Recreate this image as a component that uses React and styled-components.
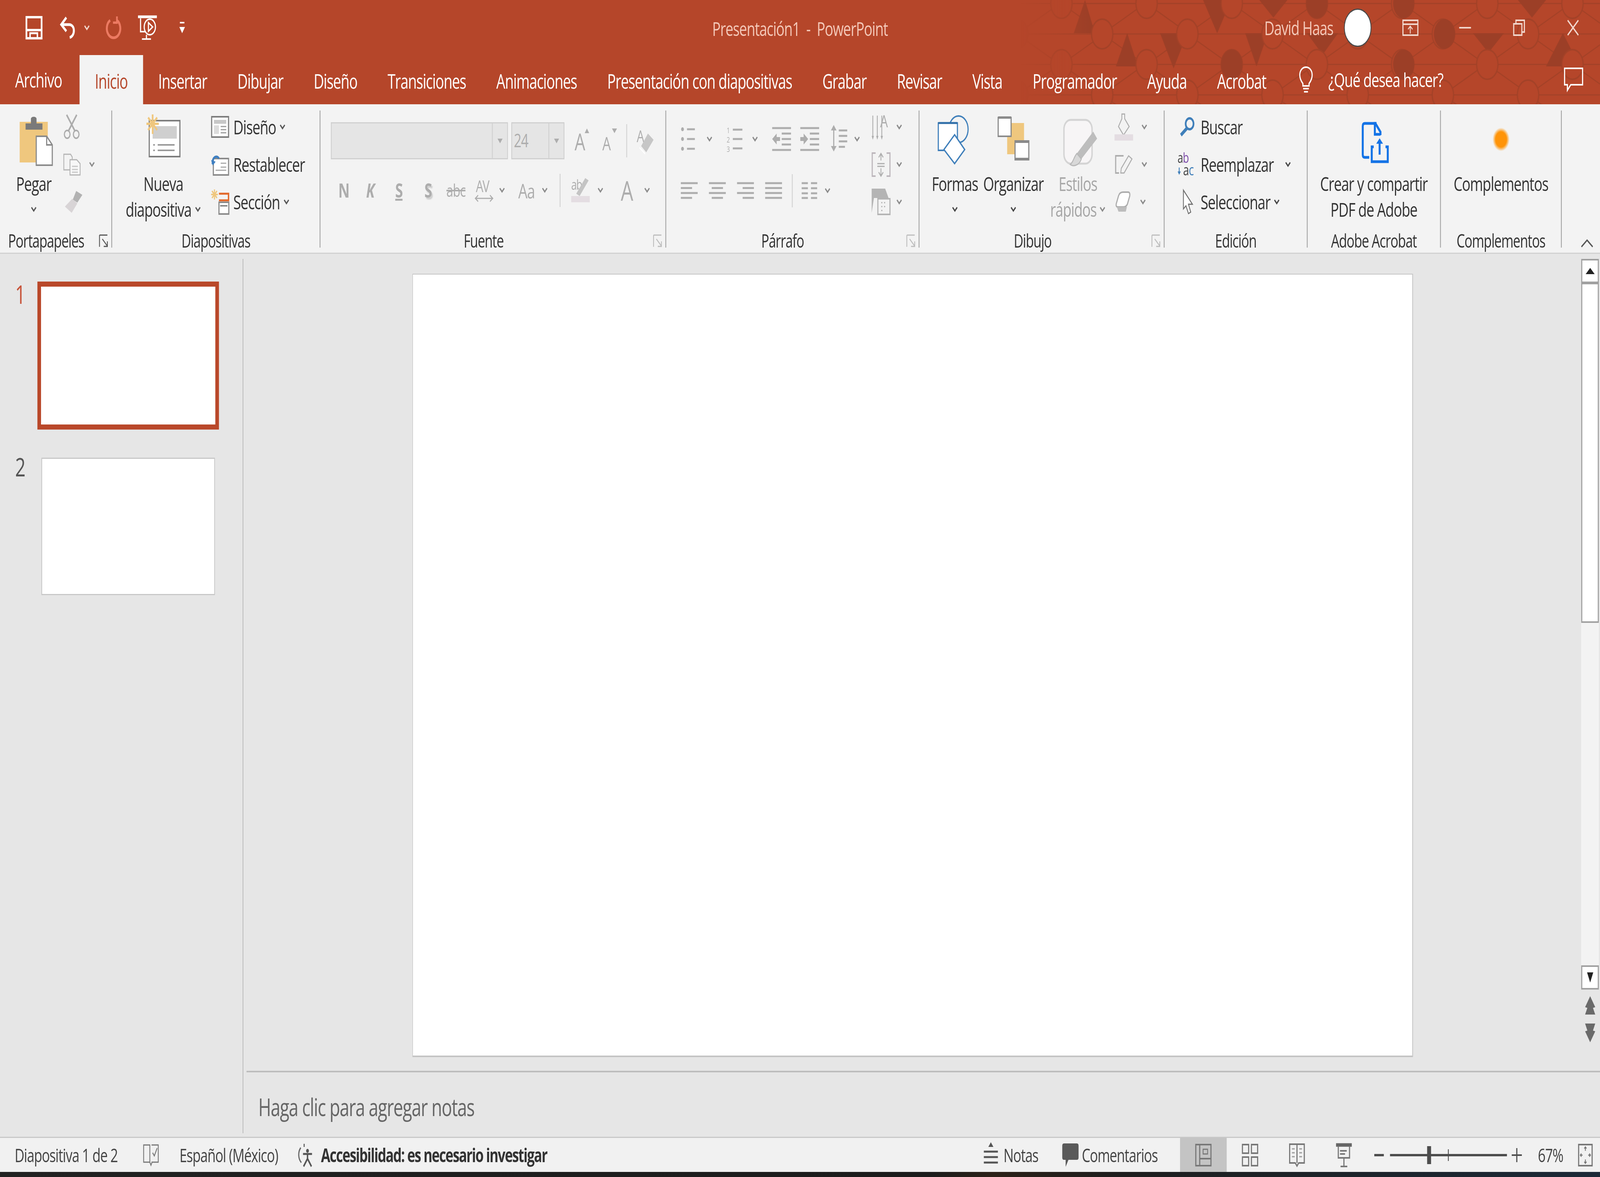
import React, { useLayoutEffect, useState } from "react";
import styled, { createGlobalStyle } from "styled-components";

const RED = "#B5462A";
const OFF = "#ADADAD";
const BLUE = "#3F7FBA";
const GOLD = "#EFC77E";
const PAGE_W = 5692;

const GlobalStyle = createGlobalStyle`
  html, body {
    margin: 0;
    padding: 0;
    overflow: hidden;
    background: #e6e6e6;
  }
  * {
    box-sizing: border-box;
  }
`;

const Page = styled.div`
  width: 5692px;
  height: 3014px;
  display: flex;
  flex-direction: column;
  overflow: hidden;
  transform-origin: 0 0;
  font-family: "Open Sans", "Liberation Sans", sans-serif;
  letter-spacing: -1.6px;
  color: #333;
`;

const Header = styled.header`
  position: relative;
  height: 267px;
  flex-shrink: 0;
  background: ${RED};
  overflow: hidden;
`;

const PatternLayer = styled.svg`
  position: absolute;
  top: 0;
  right: 0;
`;

const TitleBar = styled.div`
  position: relative;
  height: 141px;
  display: grid;
  grid-template-columns: 1fr auto 1fr;
  align-items: center;
`;

const QuickAccess = styled.div`
  display: flex;
  align-items: center;
  padding-left: 91px;
`;

const WindowTitle = styled.div`
  font-size: 50px;
  color: #f4c8b8;
  padding-top: 4px;
`;

const WindowTools = styled.div`
  display: flex;
  align-items: center;
  justify-content: flex-end;
  padding-right: 75px;
`;

const UserName = styled.span`
  font-size: 50px;
  color: #f4c8b8;
`;

const Avatar = styled.div`
  width: 98px;
  height: 98px;
  margin-left: 38px;
  margin-right: 110px;
  border-radius: 50%;
  background: #fff;
  border: 3px solid #4a4a4a;
`;

const TabRow = styled.nav`
  position: relative;
  height: 126px;
  display: flex;
`;

const Tab = styled.div`
  height: 126px;
  padding: ${(p) => (p.$up ? "0" : "6px")} 54px 0;
  display: flex;
  align-items: center;
  justify-content: center;
  font-size: 51px;
  white-space: nowrap;
`;

const FileTab = styled(Tab)`
  padding: 0 62px 0 54px;
  color: #fff;
`;

const HomeTab = styled(Tab)`
  width: 226px;
  padding: 6px 0 0;
  color: ${RED};
  background: #f3f3f3;
`;

const PlainTab = styled(Tab)`
  color: #fff;
  &:first-of-type {
    margin-left: 4px;
  }
`;

const SearchHint = styled.div`
  display: flex;
  align-items: center;
  margin-left: 62px;
  height: 126px;
  font-size: 50px;
  color: #fff;
`;

const HintText = styled.span`
  margin-left: 55px;
`;

const CommentBtn = styled.div`
  margin-left: auto;
  margin-right: 60px;
  display: flex;
  align-items: center;
`;

const Ribbon = styled.section`
  height: 383px;
  flex-shrink: 0;
  display: flex;
  padding: 16px 0 13px;
  background: #f3f3f3;
  border-bottom: 3px solid #d2d2d2;
`;

const Group = styled.div`
  position: relative;
  width: ${(p) => p.$w}px;
  flex-shrink: 0;
  display: flex;
  flex-direction: column;
  border-right: 3px solid #a3a3a3;
`;

const GroupBody = styled.div`
  height: 307px;
  display: flex;
  padding-left: ${(p) => p.$pl || 0}px;
`;

const GroupLabel = styled.div`
  height: 44px;
  line-height: 44px;
  padding-top: 4px;
  padding-right: ${(p) => p.$pr || 0}px;
  font-size: 47px;
  text-align: center;
  white-space: nowrap;
`;

const Launcher = styled.div`
  position: absolute;
  right: 10px;
  bottom: 0;
  width: 34px;
  height: 34px;
`;

const BigButton = styled.div`
  width: ${(p) => p.$w}px;
  margin-left: ${(p) => p.$ml || 0}px;
  flex-shrink: 0;
  display: flex;
  flex-direction: column;
  align-items: center;
  color: ${(p) => (p.$off ? "#A6A6A6" : "#333")};
`;

const IconSlot = styled.div`
  height: 154px;
  display: flex;
  padding-top: ${(p) => p.$top || 0}px;
  padding-left: ${(p) => p.$pl || 0}px;
`;

const BigLine = styled.div`
  height: 66px;
  display: flex;
  align-items: center;
  font-size: 50px;
  white-space: nowrap;
`;

const SmallCol = styled.div`
  margin-left: ${(p) => p.$ml || 0}px;
  flex-shrink: 0;
  display: flex;
  flex-direction: column;
  gap: 12px;
`;

const SmallRow = styled.div`
  height: 84px;
  display: flex;
  align-items: center;
  font-size: 50px;
  white-space: nowrap;
`;

const IconCell = styled.div`
  width: ${(p) => p.$w}px;
  margin-left: ${(p) => p.$ml || 0}px;
  flex-shrink: 0;
  display: flex;
  align-items: center;
  padding-left: ${(p) => p.$pl || 0}px;
`;

const FontStack = styled.div`
  display: flex;
  flex-direction: column;
  padding-top: 30px;
`;

const FontRow = styled.div`
  display: flex;
  align-items: center;
  height: ${(p) => p.$h}px;
  margin-top: ${(p) => p.$mt || 0}px;
`;

const ComboBox = styled.div`
  width: ${(p) => p.$w}px;
  height: 95px;
  margin-left: ${(p) => p.$ml || 0}px;
  display: flex;
  justify-content: space-between;
  background: #e5e5e5;
  border: 3px solid #d0d0d0;
  font-size: 47px;
  color: ${OFF};
`;

const ComboValue = styled.div`
  padding-left: 6px;
  line-height: 86px;
`;

const ComboArrow = styled.div`
  width: 54px;
  display: flex;
  align-items: center;
  justify-content: center;
  border-left: 3px solid #d0d0d0;
`;

const FontCell = styled.div`
  width: ${(p) => p.$w}px;
  margin-left: ${(p) => p.$ml || 0}px;
  flex-shrink: 0;
  text-align: center;
  font-size: ${(p) => p.$size || 50}px;
  font-weight: ${(p) => (p.$bold ? 700 : 400)};
  font-style: ${(p) => (p.$italic ? "italic" : "normal")};
  text-decoration: ${(p) => p.$line || "none"};
  text-shadow: ${(p) => (p.$shadow ? "4px 5px 3px #cfcfcf" : "none")};
  color: ${OFF};
`;

const ToolDivider = styled.div`
  width: 3px;
  height: 85px;
  margin-left: ${(p) => p.$ml || 0}px;
  flex-shrink: 0;
  background: #d2d2d2;
`;

const ParaLeft = styled.div`
  width: 679px;
  flex-shrink: 0;
  display: flex;
  flex-direction: column;
`;

const CollapseBtn = styled.div`
  margin-left: 68px;
  align-self: flex-end;
`;

const Main = styled.main`
  flex: 1;
  display: flex;
  min-height: 0;
`;

const SidePanel = styled.aside`
  width: 866px;
  flex-shrink: 0;
  margin: 13px 0 9px;
  padding: 58px 0 0 54px;
  display: flex;
  flex-direction: column;
  gap: 72px;
  background: #e6e6e6;
  border-right: 3px solid #bcbcbc;
`;

const ThumbRow = styled.div`
  display: flex;
  align-items: flex-start;
`;

const ThumbNumber = styled.div`
  width: 79px;
  margin-top: ${(p) => (p.$active ? 0 : -9)}px;
  line-height: 64px;
  font-size: 65px;
  letter-spacing: 0;
  color: ${(p) => (p.$active ? "#C8543A" : "#555")};
`;

const Thumb = styled.div`
  background: #fff;
  width: ${(p) => (p.$active ? 646 : 618)}px;
  height: ${(p) => (p.$active ? 379 : 352)}px;
  margin-left: ${(p) => (p.$active ? 0 : 14)}px;
  border: ${(p) => (p.$active ? "13px solid #B9482A" : "3px solid #c8c8c8")};
`;

const Editor = styled.div`
  flex: 1;
  display: flex;
  flex-direction: column;
  min-width: 0;
  background: #e6e6e6;
`;

const Stage = styled.div`
  height: 2092px;
  display: flex;
  padding: 51px 0 0 601px;
`;

const Slide = styled.div`
  width: 3560px;
  height: 2006px;
  flex-shrink: 0;
  background: #fff;
  border: solid #c4c4c4;
  border-width: 2px 3px 4px 2px;
`;

const ScrollColumn = styled.div`
  width: 63px;
  margin-left: 598px;
  margin-top: -38px;
  display: flex;
  flex-direction: column;
  align-items: center;
`;

const ScrollBtn = styled.div`
  width: 63px;
  height: 62px;
  flex-shrink: 0;
  display: flex;
  align-items: center;
  justify-content: center;
  background: #fff;
  border: 4px solid #a0a0a0;
`;

const ScrollTrack = styled.div`
  width: 63px;
  height: 1747px;
  background: #f3f3f3;
`;

const ScrollThumb = styled.div`
  width: 63px;
  height: 870px;
  background: #fff;
  border: 4px solid #a0a0a0;
  border-top-width: 3px;
`;

const SlideJump = styled.div`
  margin-top: ${(p) => p.$mt}px;
  display: flex;
`;

const Notes = styled.div`
  flex: 1;
  margin-left: 11px;
  padding: 46px 0 0 42px;
  border-top: 4px solid #bdbdbd;
  font-size: 62px;
  letter-spacing: -1.8px;
  color: #666;
`;

const StatusBar = styled.footer`
  height: 90px;
  flex-shrink: 0;
  display: flex;
  align-items: center;
  background: #f1f1f1;
  border-top: 3px solid #c8c8c8;
  font-size: 48px;
  color: #444;
`;

const StatusRight = styled.div`
  margin-left: auto;
  padding-right: 26px;
  display: flex;
  align-items: center;
`;

const StatusText = styled.span`
  margin-left: ${(p) => p.$ml || 0}px;
  flex-shrink: 0;
  white-space: nowrap;
  font-weight: ${(p) => (p.$bold ? 700 : 400)};
  letter-spacing: ${(p) => (p.$bold ? "-2.2px" : "-1.6px")};
  color: ${(p) => (p.$bold ? "#333" : "#444")};
`;

const ViewBtn = styled.div`
  width: ${(p) => p.$w}px;
  margin-left: ${(p) => p.$ml || 0}px;
  height: 87px;
  flex-shrink: 0;
  display: flex;
  align-items: center;
  justify-content: center;
  background: ${(p) => (p.$active ? "#C4C4C4" : "transparent")};
`;

const ZoomTrack = styled.div`
  position: relative;
  width: 416px;
  height: 6px;
  margin-left: 22px;
  flex-shrink: 0;
  background: #4d4d4d;
`;

const ZoomThumb = styled.div`
  position: absolute;
  left: 132px;
  top: -20px;
  width: 14px;
  height: 46px;
  background: #4d4d4d;
`;

const ZoomTick = styled.div`
  position: absolute;
  left: 206px;
  top: -12px;
  width: 3px;
  height: 30px;
  background: #4d4d4d;
`;

const Taskbar = styled.div`
  height: 13px;
  flex-shrink: 0;
  background: linear-gradient(90deg, #222 0%, #1c1c1c 58%, #2c2118 62%, #1e1e1e 70%, #1c2a38 100%);
`;

const Svg = styled.svg`
  display: block;
  flex-shrink: 0;
  overflow: visible;
  margin-left: ${(p) => p.$ml || 0}px;
  margin-top: ${(p) => p.$mt || 0}px;
`;

const Ic = ({ w, h, ml, mt, children, ...rest }) => (
  <Svg width={w} height={h} viewBox={`0 0 ${w} ${h}`} fill="none" $ml={ml} $mt={mt} {...rest}>
    {children}
  </Svg>
);

const Chev = ({ ml, color = "#8a8a8a" }) => (
  <Ic w={22} h={16} ml={ml}>
    <path d="M3 3L11 12L19 3" stroke={color} strokeWidth="4" />
  </Ic>
);

// positions read off the reference, in page pixels
const darkTriangles = [
  "3820,85 3860,0 3895,85",
  "4127,85 4224,85 4175,175",
  "3970,170 4010,85 4048,170",
  "4280,0 4380,0 4330,85",
  "4430,85 4510,85 4470,170",
  "4480,0 4580,0 4530,45",
  "4650,85 4760,85 4705,140",
  "5240,85 5350,85 5295,135",
  "5400,0 5500,0 5450,45",
  "5500,170 5560,85 5620,170",
];
const darkRings = ["5139,87", "4382,165", "4994,165", "4685,9", "4994,9"];

const HeaderPattern = () => {
  const rows = [9, 87, 165, 243];
  const lines = [];
  const rings = [];
  rows.forEach((y, r) => {
    for (let c = -1; c < 8; c++) {
      const x = (r % 2 ? 3618 : 3776) + c * 303;
      if (x < 3400) continue;
      lines.push(`M${x} ${y}H${x + 303}M${x} ${y}L${x + 152} ${y + 78}M${x} ${y}L${x + 152} ${y - 78}`);
      rings.push(<circle key={`${r}-${c}`} cx={x} cy={y} r="38" fill={RED} stroke="#A34228" strokeWidth="4" />);
    }
  });
  return (
    <PatternLayer width="2060" height="267" viewBox="3632 0 2060 267">
      <defs>
        <linearGradient id="fade" x1="0" x2="1" y1="0" y2="0">
          <stop offset="0" stopColor="#fff" stopOpacity="0" />
          <stop offset="0.12" stopColor="#fff" stopOpacity="1" />
        </linearGradient>
        <mask id="fadeMask" maskUnits="userSpaceOnUse" x="3632" y="0" width="2060" height="267">
          <rect x="3632" width="2060" height="267" fill="url(#fade)" />
        </mask>
      </defs>
      <g mask="url(#fadeMask)">
        <path d={lines.join("")} stroke="#A34228" strokeWidth="3" fill="none" />
        {darkTriangles.map((pts) => (
          <polygon key={pts} points={pts} fill="#9C3F27" />
        ))}
        {rings}
        {darkRings.map((pos) => {
          const [cx, cy] = pos.split(",");
          return <circle key={pos} cx={cx} cy={cy} r="38" fill="#9C3F27" />;
        })}
      </g>
    </PatternLayer>
  );
};

/* title bar icons */
const SaveIcon = () => (
  <Ic w={60} h={60}>
    <path d="M3 3H57V57H3Z" stroke="#fff" strokeWidth="6" />
    <path d="M3 36H57" stroke="#fff" strokeWidth="6" />
    <path d="M16 57V44H42V57" stroke="#fff" strokeWidth="5" />
  </Ic>
);
const UndoIcon = () => (
  <Ic w={60} h={58} ml={61}>
    <path d="M6 21H34C56 21 56 50 36 54" stroke="#fff" strokeWidth="7" />
    <path d="M24 3L6 21L24 38" stroke="#fff" strokeWidth="7" />
  </Ic>
);
const RedoIcon = () => (
  <Ic w={54} h={58} ml={56}>
    <path d="M16 10A24 24 0 1 0 40 10" stroke="#EC7A62" strokeWidth="7" />
    <path d="M40 0V16H26" stroke="#EC7A62" strokeWidth="6" />
  </Ic>
);
const PresentIcon = () => (
  <Ic w={67} h={64} ml={61}>
    <path d="M0 4H67" stroke="#fff" strokeWidth="7" />
    <path d="M9 8V42H26" stroke="#fff" strokeWidth="4" />
    <circle cx="42" cy="30" r="20" stroke="#fff" strokeWidth="4" />
    <path d="M37 19L52 30L37 41Z" stroke="#fff" strokeWidth="4" />
    <path d="M30 50V60M14 61H46" stroke="#fff" strokeWidth="4" />
  </Ic>
);
const CustomizeIcon = () => (
  <Ic w={24} h={30} ml={78}>
    <path d="M4 2H20" stroke="#fff" strokeWidth="4" />
    <path d="M2 13H22L12 29Z" fill="#fff" />
  </Ic>
);
const RibbonDisplayIcon = () => (
  <Ic w={57} h={42}>
    <path d="M2 2H55V40H2ZM2 12H55" stroke="#F2D7CD" strokeWidth="4" />
    <path d="M28 36V18M20 25L28 17L36 25" stroke="#F2D7CD" strokeWidth="3" />
  </Ic>
);
const MinimizeIcon = () => (
  <Ic w={42} h={42} ml={145}>
    <path d="M0 21H42" stroke="#F2D7CD" strokeWidth="4" />
  </Ic>
);
const RestoreIcon = () => (
  <Ic w={42} h={42} ml={150}>
    <path d="M2 11H31V40H2Z" stroke="#F2D7CD" strokeWidth="4" />
    <path d="M10 10V2H40V32H32" stroke="#F2D7CD" strokeWidth="4" />
  </Ic>
);
const CloseIcon = () => (
  <Ic w={42} h={42} ml={150}>
    <path d="M2 2L40 40M40 2L2 40" stroke="#F2D7CD" strokeWidth="4" />
  </Ic>
);
const BulbIcon = () => (
  <Ic w={50} h={68}>
    <path d="M14 44C4 34 3 26 3 22C3 10 13 2 25 2C37 2 47 10 47 22C47 26 46 34 36 44V50H14Z" stroke="#fff" strokeWidth="4" />
    <path d="M15 57H35M18 65H32" stroke="#fff" strokeWidth="4" />
  </Ic>
);
const CommentIcon = () => (
  <Ic w={68} h={62}>
    <path d="M2 2H66V44H24L12 58V44H2Z" stroke="#fff" strokeWidth="4" />
  </Ic>
);

/* clipboard group */
const PasteIcon = () => (
  <Ic w={118} h={126}>
    <rect x="0" y="13" width="100" height="104" fill={GOLD} />
    <path d="M21 33V17H40V5A10 5 0 0 1 60 5V17H81V33Z" fill="#7a7a7a" />
    <path d="M59 50H96L116 72V124H59Z" fill="#fff" stroke="#8a8a8a" strokeWidth="4" />
    <path d="M96 50V72H116" stroke="#8a8a8a" strokeWidth="4" />
  </Ic>
);
const CutIcon = () => (
  <Ic w={60} h={62}>
    <path d="M12 0L42 42M48 0L18 42" stroke="#ACACAC" strokeWidth="5" />
    <circle cx="14" cy="50" r="10" stroke="#ACACAC" strokeWidth="4" />
    <circle cx="46" cy="50" r="10" stroke="#ACACAC" strokeWidth="4" />
  </Ic>
);
const CopyIcon = () => (
  <Ic w={62} h={57}>
    <path d="M2 2H26L32 9V42H2Z" fill="#F3F3F3" stroke="#B4B4B4" strokeWidth="3" />
    <path d="M24 16H48L60 26V55H24Z" fill="#F7F7F7" stroke="#B4B4B4" strokeWidth="3" />
    <path d="M31 33H52M31 41H52M31 48H52" stroke="#C6C6C6" strokeWidth="3" />
  </Ic>
);
const BrushIcon = () => (
  <Ic w={68} h={56}>
    <path d="M46 0L68 10L50 30L34 22Z" fill="#B2B2B2" />
    <path d="M32 20L50 32L30 56L6 40Z" fill="#D8D4D6" />
  </Ic>
);
const Launch = ({ color = "#8d8d8d" }) => (
  <Launcher>
    <Ic w={34} h={34}>
      <path d="M2 2H30M2 2V32" stroke={color} strokeWidth="3" />
      <path d="M12 12L30 30M30 18V31H17" stroke={color} strokeWidth="3" />
    </Ic>
  </Launcher>
);

/* slides group */
const NewSlideIcon = () => (
  <Ic w={121} h={110}>
    <rect x="10" y="16" width="109" height="92" fill="#fff" stroke="#7c7c7c" strokeWidth="4" />
    <rect x="22" y="30" width="86" height="32" fill="#cfcfcf" />
    <path d="M40 78H100M40 92H100M24 78H30M24 92H30" stroke="#9a9a9a" strokeWidth="4" />
    <path d="M22 0V50M0 24H44M6 8L38 40M38 8L6 40" stroke={GOLD} strokeWidth="6" />
  </Ic>
);
const LayoutIcon = () => (
  <Ic w={64} h={56}>
    <rect x="2" y="2" width="60" height="52" fill="#fff" stroke="#7c7c7c" strokeWidth="4" />
    <rect x="10" y="10" width="44" height="10" fill="#c8c8c8" />
    <rect x="10" y="24" width="18" height="22" fill="#dcdcdc" />
    <path d="M34 27H54M34 35H54M34 43H54" stroke="#9a9a9a" strokeWidth="3" />
  </Ic>
);
const ResetIcon = () => (
  <Ic w={64} h={58}>
    <rect x="8" y="14" width="54" height="42" fill="#fff" stroke="#8a8a8a" strokeWidth="4" />
    <path d="M34 26H54M34 36H54M16 44H54" stroke="#a8a8a8" strokeWidth="3" />
    <path d="M5 28C4 10 20 4 28 14" stroke="#3E7FC1" strokeWidth="6" />
    <path d="M0 18L6 32L16 22Z" fill="#3E7FC1" />
  </Ic>
);
const SectionIcon = () => (
  <Ic w={64} h={65}>
    <path d="M12 0V26M0 13H24M3 4L21 22M21 4L3 22" stroke={GOLD} strokeWidth="4" />
    <path d="M28 11H62V28H28" stroke="#E2682A" strokeWidth="5" />
    <rect x="28" y="33" width="35" height="30" fill="#fff" stroke="#8a8a8a" strokeWidth="4" />
    <path d="M32 42H58" stroke="#8a8a8a" strokeWidth="4" />
  </Ic>
);

/* font group */
const GrowIcon = ({ size, up }) => (
  <Ic w={58} h={64}>
    <text x="0" y="56" fontFamily="Open Sans, sans-serif" fontSize={size} fill={OFF}>
      A
    </text>
    <path d={up ? "M36 12L44 0L52 12Z" : "M34 0L52 0L43 12Z"} fill={OFF} />
  </Ic>
);
const ClearFormatIcon = () => (
  <Ic w={61} h={66}>
    <text x="0" y="36" fontFamily="Open Sans, sans-serif" fontSize="42" fill={OFF}>
      A
    </text>
    <path d="M40 14L60 30L34 62L16 46Z" fill="#C6C6C6" />
    <path d="M10 50L30 66" stroke="#fff" strokeWidth="3" />
  </Ic>
);
const AvIcon = () => (
  <Ic w={66} h={62}>
    <text x="4" y="36" fontFamily="Open Sans, sans-serif" fontSize="42" letterSpacing="-3" fill={OFF}>
      AV
    </text>
    <path d="M2 52H64M12 44L2 52L12 60M54 44L64 52L54 60" stroke={OFF} strokeWidth="3" />
  </Ic>
);
const HighlightIcon = () => (
  <Ic w={67} h={62}>
    <text x="0" y="30" fontFamily="Open Sans, sans-serif" fontSize="36" letterSpacing="-2" fill={OFF}>
      ab
    </text>
    <path d="M50 0L62 6L30 46L18 40Z" fill="#C4C4C4" />
    <rect x="0" y="46" width="66" height="16" fill="#E4DDE2" />
  </Ic>
);

/* paragraph group */
const BulletsIcon = () => (
  <Ic w={54} h={62}>
    <path d="M22 6H50M22 31H50M22 56H50" stroke={OFF} strokeWidth="5" />
    <circle cx="6" cy="6" r="5" fill={OFF} />
    <circle cx="6" cy="31" r="5" fill={OFF} />
    <circle cx="6" cy="56" r="5" fill={OFF} />
  </Ic>
);
const NumberingIcon = () => (
  <Ic w={58} h={66} ml={50}>
    <text x="0" y="18" fontFamily="Open Sans, sans-serif" fontSize="20" fill={OFF}>1</text>
    <text x="0" y="42" fontFamily="Open Sans, sans-serif" fontSize="20" fill={OFF}>2</text>
    <text x="0" y="66" fontFamily="Open Sans, sans-serif" fontSize="20" fill={OFF}>3</text>
    <path d="M22 9H56M22 33H56M22 57H56" stroke={OFF} strokeWidth="5" />
  </Ic>
);
const IndentIcon = ({ out, ml }) => (
  <Ic w={67} h={62} ml={ml}>
    <path d="M0 3H67M0 59H67M34 17H67M34 31H67M34 45H67" stroke={OFF} strokeWidth="5" />
    {out ? <path d="M0 31L16 17V26H28V36H16V45Z" fill={OFF} /> : <path d="M28 31L12 17V26H0V36H12V45Z" fill={OFF} />}
  </Ic>
);
const SpacingIcon = ({ ml }) => (
  <Ic w={59} h={68} ml={ml} mt={-4}>
    <path d="M10 10V58" stroke={OFF} strokeWidth="4" />
    <path d="M0 14L10 0L20 14ZM0 54L10 68L20 54Z" fill={OFF} />
    <path d="M28 14H58M28 28H58M28 42H58M28 56H50" stroke={OFF} strokeWidth="5" />
  </Ic>
);
const TextDirIcon = () => (
  <Ic w={65} h={70}>
    <path d="M4 6V62M20 6V62M36 6V62" stroke={OFF} strokeWidth="3" />
    <path d="M0 58L4 68L8 58ZM16 58L20 68L24 58ZM32 58L36 68L40 58Z" fill={OFF} />
    <text x="30" y="36" fontFamily="Open Sans, sans-serif" fontSize="44" fill={OFF}>A</text>
  </Ic>
);
const AlignTextIcon = () => (
  <Ic w={67} h={65}>
    <path d="M14 3H2V62H14M53 3H65V62H53" stroke="#BDB7BC" strokeWidth="4" />
    <path d="M33 4V22M25 14L33 4L41 14M33 42V60M25 52L33 62L41 52M20 30H46M20 37H46" stroke={OFF} strokeWidth="3" />
  </Ic>
);
const SmartArtIcon = () => (
  <Ic w={67} h={68}>
    <path d="M0 0H48L60 24H8L0 62Z" fill="#B4B4B4" />
    <rect x="22" y="26" width="43" height="40" fill="#F3F3F3" stroke="#B4B4B4" strokeWidth="4" />
    <path d="M34 36H38M34 46H38M34 56H38M44 36H48M44 46H48" stroke={OFF} strokeWidth="3" />
  </Ic>
);
const AlignIcon = ({ kind, ml }) => {
  const short = kind === "left" ? [0, 40] : kind === "right" ? [20, 60] : kind === "center" ? [10, 50] : [0, 60];
  const rows = [[0, 60], short, [0, 60], short];
  return (
    <Ic w={60} h={44} ml={ml}>
      <path d={rows.map(([a, b], i) => `M${a} ${3 + i * 12.6}H${b}`).join("")} stroke={OFF} strokeWidth="5" />
    </Ic>
  );
};
const ColumnsIcon = () => (
  <Ic w={55} h={44} ml={32}>
    <path d="M0 3H22M33 3H55M0 16H22M33 16H55M0 29H22M33 29H55M0 41H22M33 41H55" stroke={OFF} strokeWidth="5" />
  </Ic>
);

/* drawing group */
const ShapesIcon = () => (
  <Ic w={122} h={126}>
    <circle cx="74" cy="36" r="34" fill="#F3F3F3" stroke={BLUE} strokeWidth="4" />
    <rect x="2" y="20" width="68" height="70" fill="#fff" stroke={BLUE} strokeWidth="4" />
    <path d="M2 20H70" stroke="#2F6EA8" strokeWidth="5" />
    <path d="M60 50L96 88L60 124L22 88Z" fill="#fff" stroke={BLUE} strokeWidth="4" />
  </Ic>
);
const ArrangeIcon = () => (
  <Ic w={113} h={113}>
    <rect x="34" y="16" width="60" height="80" fill={GOLD} />
    <rect x="2" y="2" width="46" height="48" fill="#fff" stroke="#8a8a8a" strokeWidth="4" />
    <path d="M2 2H48" stroke="#8a8a8a" strokeWidth="6" />
    <rect x="62" y="62" width="49" height="48" fill="#fff" stroke="#8a8a8a" strokeWidth="4" />
    <path d="M62 64H111M62 108H111" stroke="#8a8a8a" strokeWidth="6" />
  </Ic>
);
const QuickStylesIcon = () => (
  <Ic w={124} h={122}>
    <rect x="4" y="4" width="100" height="112" rx="24" fill="#F7F5F6" stroke="#D4D4D4" strokeWidth="5" />
    <path d="M122 52L66 104L50 90L108 34Z" fill="#BDBDBD" />
    <path d="M50 90L66 104C58 122 36 124 26 118C38 112 38 100 50 90Z" fill="#D8D8D8" stroke="#B8B8B8" strokeWidth="3" />
  </Ic>
);
const FillIcon = () => (
  <Ic w={66} h={70}>
    <path d="M26 2H36V14L52 34L32 56L14 34L26 14Z" stroke={OFF} strokeWidth="3" />
    <rect x="0" y="54" width="66" height="16" fill="#E4DDE2" />
  </Ic>
);
const OutlineIcon = () => (
  <Ic w={66} h={48}>
    <path d="M32 2H4V46H16" stroke={OFF} strokeWidth="4" />
    <path d="M50 2L62 10L34 46L22 46L24 34Z" fill="#F3F3F3" stroke={OFF} strokeWidth="3" />
  </Ic>
);
const EffectsIcon = () => (
  <Ic w={60} h={54}>
    <path d="M14 12Q18 2 30 2H48Q56 2 54 12L46 32Q42 40 32 40H12Q4 40 6 32Z" fill="#fff" stroke={OFF} strokeWidth="4" />
    <path d="M8 40H44L40 52H14Z" fill="#BDBDBD" />
  </Ic>
);

/* editing group */
const FindIcon = () => (
  <Ic w={56} h={50}>
    <circle cx="37" cy="17" r="14" stroke="#3F7FBA" strokeWidth="6" />
    <path d="M28 28L6 46" stroke="#3F7FBA" strokeWidth="9" />
  </Ic>
);
const ReplaceIcon = () => (
  <Ic w={68} h={64}>
    <text x="0" y="28" fontFamily="Open Sans, sans-serif" fontSize="36" letterSpacing="-1" fill="#444">
      a<tspan fill="#7B4BA8">b</tspan>
    </text>
    <text x="20" y="60" fontFamily="Open Sans, sans-serif" fontSize="38" letterSpacing="-1" fill="#444">
      a<tspan fill="#3F7FBA">c</tspan>
    </text>
    <path d="M6 40V56M2 50L6 56L10 50" stroke="#3F7FBA" strokeWidth="3" />
  </Ic>
);
const SelectIcon = () => (
  <Ic w={40} h={64}>
    <path d="M4 2L36 38H22L30 58L22 62L13 42L4 50Z" fill="#fff" stroke="#6f6f6f" strokeWidth="3" />
  </Ic>
);
const ShareIcon = () => (
  <Ic w={96} h={106}>
    <path d="M52 4H10Q3 4 3 11V84Q3 91 10 91H26" stroke="#1473E6" strokeWidth="7" />
    <path d="M42 4H48L66 26V34" stroke="#1473E6" strokeWidth="7" />
    <path d="M46 4V32H66" stroke="#1473E6" strokeWidth="7" />
    <path d="M42 64H35V102H92V64H84" stroke="#1473E6" strokeWidth="7" />
    <path d="M63 84V48" stroke="#1473E6" strokeWidth="7" />
    <path d="M51 56L63 42L75 56Z" fill="#1473E6" />
  </Ic>
);
const AddInDot = () => (
  <Ic w={60} h={60}>
    <defs>
      <radialGradient id="dot">
        <stop offset="0.65" stopColor="#FF9408" />
        <stop offset="1" stopColor="#FF9408" stopOpacity="0" />
      </radialGradient>
    </defs>
    <circle cx="30" cy="30" r="30" fill="url(#dot)" />
  </Ic>
);

/* status bar */
const SpellIcon = () => (
  <Ic w={56} h={56} ml={90}>
    <path d="M2 2H24V46H2ZM30 2H54V46H30M24 46L28 54L32 46" stroke="#777" strokeWidth="3" />
    <path d="M34 22L40 30L50 10" stroke="#777" strokeWidth="3" />
  </Ic>
);
const AccessIcon = () => (
  <Ic w={70} h={62} ml={69}>
    <path d="M24 2V10M12 12C2 22 2 40 14 50" stroke="#666" strokeWidth="4" />
    <circle cx="36" cy="20" r="5" fill="#555" />
    <path d="M20 28H52M36 28V40M36 40L22 60M36 40L50 60" stroke="#555" strokeWidth="5" />
  </Ic>
);
const NotesIcon = () => (
  <Ic w={50} h={66}>
    <path d="M16 12L25 0L34 12Z" fill="#555" />
    <path d="M0 24H50M0 38H50M0 52H50" stroke="#555" strokeWidth="5" />
  </Ic>
);
const CommentsIcon = () => (
  <Ic w={58} h={60} ml={85}>
    <path d="M6 0H52Q58 0 58 6V36Q58 42 52 42H22L12 60V42H6Q0 42 0 36V6Q0 0 6 0Z" fill="#5a5a5a" />
  </Ic>
);
const NormalViewIcon = () => (
  <Ic w={58} h={58}>
    <path d="M2 2H56V56H2ZM16 2V56M16 38H56" stroke="#777" strokeWidth="4" />
    <rect x="28" y="14" width="16" height="12" stroke="#777" strokeWidth="3" />
  </Ic>
);
const SorterIcon = () => (
  <Ic w={60} h={58}>
    <path d="M2 2H24V24H2ZM34 2H56V24H34ZM2 34H24V56H2ZM34 34H56V56H34Z" stroke="#777" strokeWidth="4" />
  </Ic>
);
const ReadingIcon = () => (
  <Ic w={56} h={60}>
    <path d="M2 2H54V50H34L28 58L22 50H2ZM28 2V50" stroke="#777" strokeWidth="4" />
    <path d="M10 14H20M10 24H20M10 34H20M36 14H46M36 24H46M36 34H46" stroke="#999" strokeWidth="3" />
  </Ic>
);
const SlideshowIcon = () => (
  <Ic w={56} h={62}>
    <path d="M0 5H56" stroke="#666" strokeWidth="9" />
    <path d="M8 8V38H48V8M14 20H38M14 28H32" stroke="#777" strokeWidth="4" />
    <path d="M28 38V58M16 60H40" stroke="#777" strokeWidth="4" />
  </Ic>
);
const FitIcon = () => (
  <Ic w={52} h={58}>
    <path d="M2 2H50V56H2Z" stroke="#777" strokeWidth="4" />
    <path d="M26 8V18M22 12L26 8L30 12M26 40V50M22 46L26 50L30 46M8 29H16M12 25L8 29L12 33M44 29H36M40 25L44 29L40 33" stroke="#777" strokeWidth="3" />
  </Ic>
);
const UpTri = () => (
  <Ic w={32} h={16}>
    <path d="M0 16L16 0L32 16Z" fill="#222" />
  </Ic>
);
const DownTri = () => (
  <Ic w={22} h={26}>
    <path d="M0 0H22L11 26Z" fill="#222" />
  </Ic>
);
const JumpUp = () => (
  <Ic w={36} h={47}>
    <path d="M18 0L36 28L28 30L36 47H0L8 30L0 28Z" fill="#6a6a6a" />
  </Ic>
);
const JumpDown = () => (
  <Ic w={36} h={48}>
    <path d="M0 0H36L28 18L36 20L18 48L0 20L8 18Z" fill="#6a6a6a" />
  </Ic>
);

const ComboTri = () => (
  <Ic w={18} h={12}>
    <path d="M0 0H18L9 12Z" fill={OFF} />
  </Ic>
);

const tabs = ["Insertar", "Dibujar", "Diseño", "Transiciones", "Animaciones", "Presentación con diapositivas", "Grabar", "Revisar", "Vista", "Programador", "Ayuda", "Acrobat"];

export default function App() {
  // the sandbox clamps the window to 4096 wide, so squeeze the 5692 layout to whatever we got
  const [scaleX, setScaleX] = useState(1);
  useLayoutEffect(() => {
    setScaleX(Math.min(1, window.innerWidth / PAGE_W));
  }, []);

  return (
    <Page style={{ transform: `scaleX(${scaleX})` }}>
      <GlobalStyle />
      <Header>
        <HeaderPattern />
        <TitleBar>
          <QuickAccess>
            <SaveIcon />
            <UndoIcon />
            <Chev ml={26} color="#F2D7CD" />
            <RedoIcon />
            <PresentIcon />
            <CustomizeIcon />
          </QuickAccess>
          <WindowTitle>Presentación1&nbsp; -&nbsp; PowerPoint</WindowTitle>
          <WindowTools>
            <UserName>David Haas</UserName>
            <Avatar />
            <RibbonDisplayIcon />
            <MinimizeIcon />
            <RestoreIcon />
            <CloseIcon />
          </WindowTools>
        </TitleBar>
        <TabRow>
          <FileTab>Archivo</FileTab>
          <HomeTab>Inicio</HomeTab>
          {tabs.map((name) => (
            <PlainTab key={name}>{name}</PlainTab>
          ))}
          <SearchHint>
            <BulbIcon />
            <HintText>¿Qué desea hacer?</HintText>
          </SearchHint>
          <CommentBtn>
            <CommentIcon />
          </CommentBtn>
        </TabRow>
      </Header>

      <Ribbon>
        <Group $w={399}>
          <GroupBody>
            <BigButton $w={210} $ml={15}>
              <IconSlot $top={16} $pl={18}>
                <PasteIcon />
              </IconSlot>
              <BigLine>Pegar</BigLine>
              <BigLine>
                <Chev color="#555" />
              </BigLine>
            </BigButton>
            <SmallCol>
              <SmallRow>
                <IconCell $w={60}>
                  <CutIcon />
                </IconCell>
              </SmallRow>
              <SmallRow>
                <IconCell $w={91}>
                  <CopyIcon />
                </IconCell>
                <Chev />
              </SmallRow>
              <SmallRow>
                <IconCell $w={70}>
                  <BrushIcon />
                </IconCell>
              </SmallRow>
            </SmallCol>
          </GroupBody>
          <GroupLabel $pr={68}>Portapapeles</GroupLabel>
          <Launch color="#555" />
        </Group>

        <Group $w={741}>
          <GroupBody>
            <BigButton $w={304} $ml={30}>
              <IconSlot $top={10}>
                <NewSlideIcon />
              </IconSlot>
              <BigLine>Nueva</BigLine>
              <BigLine>
                diapositiva
                <Chev ml={12} color="#555" />
              </BigLine>
            </BigButton>
            <SmallCol $ml={18}>
              <SmallRow>
                <IconCell $w={79}>
                  <LayoutIcon />
                </IconCell>
                Diseño
                <Chev ml={12} color="#555" />
              </SmallRow>
              <SmallRow>
                <IconCell $w={79}>
                  <ResetIcon />
                </IconCell>
                Restablecer
              </SmallRow>
              <SmallRow>
                <IconCell $w={79}>
                  <SectionIcon />
                </IconCell>
                Sección
                <Chev ml={12} color="#555" />
              </SmallRow>
            </SmallCol>
          </GroupBody>
          <GroupLabel>Diapositivas</GroupLabel>
        </Group>

        <Group $w={1230}>
          <GroupBody $pl={37}>
            <FontStack>
              <FontRow $h={95}>
                <ComboBox $w={630}>
                  <ComboValue />
                  <ComboArrow>
                    <ComboTri />
                  </ComboArrow>
                </ComboBox>
                <ComboBox $w={189} $ml={12}>
                  <ComboValue>24</ComboValue>
                  <ComboArrow>
                    <ComboTri />
                  </ComboArrow>
                </ComboBox>
                <IconCell $w={99} $pl={36}>
                  <GrowIcon size={60} up />
                </IconCell>
                <IconCell $w={121} $pl={36}>
                  <GrowIcon size={48} />
                </IconCell>
                <ToolDivider />
                <IconCell $w={95} $pl={34}>
                  <ClearFormatIcon />
                </IconCell>
              </FontRow>
              <FontRow $h={84} $mt={37}>
                <FontCell $w={92} $bold>N</FontCell>
                <FontCell $w={96} $bold $italic>K</FontCell>
                <FontCell $w={108} $bold $line="underline">S</FontCell>
                <FontCell $w={100} $bold $shadow>S</FontCell>
                <FontCell $w={98} $size={44} $line="line-through">abc</FontCell>
                <IconCell $w={100} $pl={18}>
                  <AvIcon />
                </IconCell>
                <Chev ml={4} />
                <FontCell $w={100} $ml={26} $size={52}>Aa</FontCell>
                <Chev ml={4} />
                <ToolDivider $ml={42} />
                <IconCell $w={67} $ml={38}>
                  <HighlightIcon />
                </IconCell>
                <Chev ml={26} />
                <FontCell $w={50} $ml={58} $size={70}>A</FontCell>
                <Chev ml={36} />
              </FontRow>
            </FontStack>
          </GroupBody>
          <GroupLabel $pr={66}>Fuente</GroupLabel>
          <Launch color="#bdbdbd" />
        </Group>

        <Group $w={901}>
          <GroupBody $pl={52}>
            <ParaLeft>
              <FontRow $h={62} $mt={42}>
                <BulletsIcon />
                <Chev ml={37} />
                <NumberingIcon />
                <Chev ml={32} />
                <IndentIcon out ml={50} />
                <IndentIcon ml={33} />
                <SpacingIcon ml={42} />
                <Chev ml={23} />
              </FontRow>
              <FontRow $h={44} $mt={79}>
                <AlignIcon kind="left" />
                <AlignIcon kind="center" ml={40} />
                <AlignIcon kind="right" ml={40} />
                <AlignIcon kind="justify" ml={40} />
                <ToolDivider $ml={35} />
                <ColumnsIcon />
                <Chev ml={26} />
              </FontRow>
            </ParaLeft>
            <SmallCol>
              <SmallRow>
                <IconCell $w={87}>
                  <TextDirIcon />
                </IconCell>
                <Chev />
              </SmallRow>
              <SmallRow>
                <IconCell $w={87}>
                  <AlignTextIcon />
                </IconCell>
                <Chev />
              </SmallRow>
              <SmallRow>
                <IconCell $w={87}>
                  <SmartArtIcon />
                </IconCell>
                <Chev />
              </SmallRow>
            </SmallCol>
          </GroupBody>
          <GroupLabel $pr={70}>Párrafo</GroupLabel>
          <Launch color="#bdbdbd" />
        </Group>

        <Group $w={872}>
          <GroupBody>
            <BigButton $w={190} $ml={31}>
              <IconSlot $top={12}>
                <ShapesIcon />
              </IconSlot>
              <BigLine>Formas</BigLine>
              <BigLine>
                <Chev color="#444" />
              </BigLine>
            </BigButton>
            <BigButton $w={226}>
              <IconSlot $top={16}>
                <ArrangeIcon />
              </IconSlot>
              <BigLine>Organizar</BigLine>
              <BigLine>
                <Chev color="#444" />
              </BigLine>
            </BigButton>
            <BigButton $w={233} $off>
              <IconSlot $top={20} $pl={16}>
                <QuickStylesIcon />
              </IconSlot>
              <BigLine>Estilos</BigLine>
              <BigLine>
                rápidos
                <Chev ml={10} />
              </BigLine>
            </BigButton>
            <SmallCol $ml={14}>
              <SmallRow>
                <IconCell $w={95}>
                  <FillIcon />
                </IconCell>
                <Chev />
              </SmallRow>
              <SmallRow>
                <IconCell $w={95}>
                  <OutlineIcon />
                </IconCell>
                <Chev />
              </SmallRow>
              <SmallRow>
                <IconCell $w={90}>
                  <EffectsIcon />
                </IconCell>
                <Chev />
              </SmallRow>
            </SmallCol>
          </GroupBody>
          <GroupLabel $pr={64}>Dibujo</GroupLabel>
          <Launch color="#bdbdbd" />
        </Group>

        <Group $w={509}>
          <GroupBody $pl={46}>
            <SmallCol>
              <SmallRow>
                <IconCell $w={82} $pl={6}>
                  <FindIcon />
                </IconCell>
                Buscar
              </SmallRow>
              <SmallRow>
                <IconCell $w={82}>
                  <ReplaceIcon />
                </IconCell>
                Reemplazar
                <Chev ml={40} color="#444" />
              </SmallRow>
              <SmallRow>
                <IconCell $w={82} $pl={17}>
                  <SelectIcon />
                </IconCell>
                Seleccionar
                <Chev ml={12} color="#444" />
              </SmallRow>
            </SmallCol>
          </GroupBody>
          <GroupLabel>Edición</GroupLabel>
        </Group>

        <Group $w={474}>
          <GroupBody>
            <BigButton $w={471}>
              <IconSlot $top={29} $pl={10}>
                <ShareIcon />
              </IconSlot>
              <BigLine>Crear y compartir</BigLine>
              <BigLine>PDF de Adobe</BigLine>
            </BigButton>
          </GroupBody>
          <GroupLabel>Adobe Acrobat</GroupLabel>
        </Group>

        <Group $w={430}>
          <GroupBody>
            <BigButton $w={427}>
              <IconSlot $top={44}>
                <AddInDot />
              </IconSlot>
              <BigLine>Complementos</BigLine>
            </BigButton>
          </GroupBody>
          <GroupLabel>Complementos</GroupLabel>
        </Group>

        <CollapseBtn>
          <Ic w={44} h={22}>
            <path d="M2 20L22 3L42 20" stroke="#555" strokeWidth="4" />
          </Ic>
        </CollapseBtn>
      </Ribbon>

      <Main>
        <SidePanel>
          <ThumbRow>
            <ThumbNumber $active>1</ThumbNumber>
            <Thumb $active />
          </ThumbRow>
          <ThumbRow>
            <ThumbNumber>2</ThumbNumber>
            <Thumb />
          </ThumbRow>
        </SidePanel>

        <Editor>
          <Stage>
            <Slide />
            <ScrollColumn>
              <ScrollBtn>
                <UpTri />
              </ScrollBtn>
              <ScrollTrack>
                <ScrollThumb />
              </ScrollTrack>
              <ScrollBtn>
                <DownTri />
              </ScrollBtn>
              <SlideJump $mt={17}>
                <JumpUp />
              </SlideJump>
              <SlideJump $mt={23}>
                <JumpDown />
              </SlideJump>
            </ScrollColumn>
          </Stage>
          <Notes>Haga clic para agregar notas</Notes>
        </Editor>
      </Main>

      <StatusBar>
        <StatusText $ml={52}>Diapositiva 1 de 2</StatusText>
        <SpellIcon />
        <StatusText $ml={74}>Español (México)</StatusText>
        <AccessIcon />
        <StatusText $ml={14} $bold>Accesibilidad: es necesario investigar</StatusText>
        <StatusRight>
          <NotesIcon />
          <StatusText $ml={20}>Notas</StatusText>
          <CommentsIcon />
          <StatusText $ml={12}>Comentarios</StatusText>
          <ViewBtn $w={166} $ml={80} $active>
            <NormalViewIcon />
          </ViewBtn>
          <ViewBtn $w={60} $ml={54}>
            <SorterIcon />
          </ViewBtn>
          <ViewBtn $w={56} $ml={108}>
            <ReadingIcon />
          </ViewBtn>
          <ViewBtn $w={56} $ml={111}>
            <SlideshowIcon />
          </ViewBtn>
          <Ic w={34} h={6} ml={80}>
            <rect width="34" height="6" fill="#4d4d4d" />
          </Ic>
          <ZoomTrack>
            <ZoomThumb />
            <ZoomTick />
          </ZoomTrack>
          <Ic w={36} h={36} ml={17}>
            <path d="M18 0V36M0 18H36" stroke="#4d4d4d" strokeWidth="4" />
          </Ic>
          <StatusText $ml={57}>67%</StatusText>
          <ViewBtn $w={52} $ml={53}>
            <FitIcon />
          </ViewBtn>
        </StatusRight>
      </StatusBar>
      <Taskbar />
    </Page>
  );
}
